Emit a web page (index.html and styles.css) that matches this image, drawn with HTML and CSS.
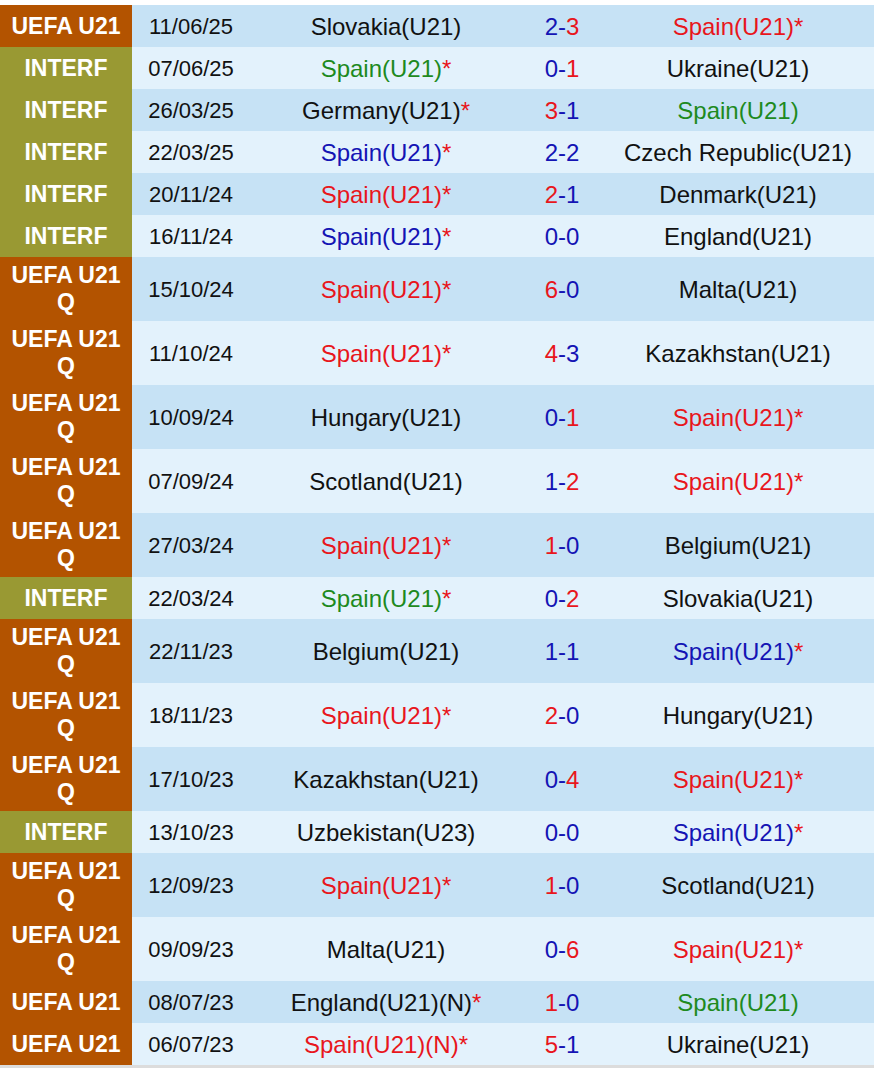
FILE: index.html
```html
<!DOCTYPE html>
<html>
<head>
<meta charset="utf-8">
<link rel="stylesheet" href="styles.css">
</head>
<body>
<table class="results">
<tbody>
<tr class="one dark"><td class="comp euro">UEFA U21</td><td class="date">11/06/25</td><td class="team">Slovakia(U21)</td><td class="score"><span class="b">2</span><span class="b">-</span><span class="r">3</span></td><td class="team r">Spain(U21)<span class="star">*</span></td></tr>
<tr class="one light"><td class="comp fr">INTERF</td><td class="date">07/06/25</td><td class="team g">Spain(U21)<span class="star">*</span></td><td class="score"><span class="b">0</span><span class="b">-</span><span class="r">1</span></td><td class="team">Ukraine(U21)</td></tr>
<tr class="one dark"><td class="comp fr">INTERF</td><td class="date">26/03/25</td><td class="team">Germany(U21)<span class="star">*</span></td><td class="score"><span class="r">3</span><span class="b">-</span><span class="b">1</span></td><td class="team g">Spain(U21)</td></tr>
<tr class="one light"><td class="comp fr">INTERF</td><td class="date">22/03/25</td><td class="team b">Spain(U21)<span class="star">*</span></td><td class="score"><span class="b">2-2</span></td><td class="team">Czech Republic(U21)</td></tr>
<tr class="one dark"><td class="comp fr">INTERF</td><td class="date">20/11/24</td><td class="team r">Spain(U21)<span class="star">*</span></td><td class="score"><span class="r">2</span><span class="b">-</span><span class="b">1</span></td><td class="team">Denmark(U21)</td></tr>
<tr class="one light"><td class="comp fr">INTERF</td><td class="date">16/11/24</td><td class="team b">Spain(U21)<span class="star">*</span></td><td class="score"><span class="b">0-0</span></td><td class="team">England(U21)</td></tr>
<tr class="two dark"><td class="comp euro">UEFA U21 Q</td><td class="date">15/10/24</td><td class="team r">Spain(U21)<span class="star">*</span></td><td class="score"><span class="r">6</span><span class="b">-</span><span class="b">0</span></td><td class="team">Malta(U21)</td></tr>
<tr class="two light"><td class="comp euro">UEFA U21 Q</td><td class="date">11/10/24</td><td class="team r">Spain(U21)<span class="star">*</span></td><td class="score"><span class="r">4</span><span class="b">-</span><span class="b">3</span></td><td class="team">Kazakhstan(U21)</td></tr>
<tr class="two dark"><td class="comp euro">UEFA U21 Q</td><td class="date">10/09/24</td><td class="team">Hungary(U21)</td><td class="score"><span class="b">0</span><span class="b">-</span><span class="r">1</span></td><td class="team r">Spain(U21)<span class="star">*</span></td></tr>
<tr class="two light"><td class="comp euro">UEFA U21 Q</td><td class="date">07/09/24</td><td class="team">Scotland(U21)</td><td class="score"><span class="b">1</span><span class="b">-</span><span class="r">2</span></td><td class="team r">Spain(U21)<span class="star">*</span></td></tr>
<tr class="two dark"><td class="comp euro">UEFA U21 Q</td><td class="date">27/03/24</td><td class="team r">Spain(U21)<span class="star">*</span></td><td class="score"><span class="r">1</span><span class="b">-</span><span class="b">0</span></td><td class="team">Belgium(U21)</td></tr>
<tr class="one light"><td class="comp fr">INTERF</td><td class="date">22/03/24</td><td class="team g">Spain(U21)<span class="star">*</span></td><td class="score"><span class="b">0</span><span class="b">-</span><span class="r">2</span></td><td class="team">Slovakia(U21)</td></tr>
<tr class="two dark"><td class="comp euro">UEFA U21 Q</td><td class="date">22/11/23</td><td class="team">Belgium(U21)</td><td class="score"><span class="b">1-1</span></td><td class="team b">Spain(U21)<span class="star">*</span></td></tr>
<tr class="two light"><td class="comp euro">UEFA U21 Q</td><td class="date">18/11/23</td><td class="team r">Spain(U21)<span class="star">*</span></td><td class="score"><span class="r">2</span><span class="b">-</span><span class="b">0</span></td><td class="team">Hungary(U21)</td></tr>
<tr class="two dark"><td class="comp euro">UEFA U21 Q</td><td class="date">17/10/23</td><td class="team">Kazakhstan(U21)</td><td class="score"><span class="b">0</span><span class="b">-</span><span class="r">4</span></td><td class="team r">Spain(U21)<span class="star">*</span></td></tr>
<tr class="one light"><td class="comp fr">INTERF</td><td class="date">13/10/23</td><td class="team">Uzbekistan(U23)</td><td class="score"><span class="b">0-0</span></td><td class="team b">Spain(U21)<span class="star">*</span></td></tr>
<tr class="two dark"><td class="comp euro">UEFA U21 Q</td><td class="date">12/09/23</td><td class="team r">Spain(U21)<span class="star">*</span></td><td class="score"><span class="r">1</span><span class="b">-</span><span class="b">0</span></td><td class="team">Scotland(U21)</td></tr>
<tr class="two light"><td class="comp euro">UEFA U21 Q</td><td class="date">09/09/23</td><td class="team">Malta(U21)</td><td class="score"><span class="b">0</span><span class="b">-</span><span class="r">6</span></td><td class="team r">Spain(U21)<span class="star">*</span></td></tr>
<tr class="one dark"><td class="comp euro">UEFA U21</td><td class="date">08/07/23</td><td class="team">England(U21)(N)<span class="star">*</span></td><td class="score"><span class="r">1</span><span class="b">-</span><span class="b">0</span></td><td class="team g">Spain(U21)</td></tr>
<tr class="one light"><td class="comp euro">UEFA U21</td><td class="date">06/07/23</td><td class="team r">Spain(U21)(N)<span class="star">*</span></td><td class="score"><span class="r">5</span><span class="b">-</span><span class="b">1</span></td><td class="team">Ukraine(U21)</td></tr>
</tbody>
</table>
</body>
</html>
```
FILE: styles.css
```css
html, body {
  margin: 0;
  padding: 0;
  background: #ffffff;
}
body {
  padding-top: 5px;
  font-family: "Liberation Sans", Arial, sans-serif;
}
.results {
  width: 874px;
  border-collapse: collapse;
  border-spacing: 0;
  table-layout: fixed;
  border-bottom: 3px solid #dcdcdc;
}
.results td {
  padding: 0;
  text-align: center;
  vertical-align: middle;
  font-size: 24px;
  line-height: 27px;
  color: #111111;
  white-space: nowrap;
}
.results .one td { height: 42px; }
.results .two td { height: 64px; }
.dark { background: #c6e2f5; }
.light { background: #e3f2fc; }
.results td.comp {
  width: 116px;
  padding: 0 8px;
  color: #ffffff;
  font-weight: bold;
  font-size: 23px;
  white-space: normal;
}
.results td.euro { background: #b35300; }
.results td.fr { background: #999933; }
.results td.date { width: 118px; font-size: 22px; }
.results td.team:nth-child(3) { width: 272px; }
.results td.score { width: 80px; }
.results .b { color: #1414b4; }
.results .r { color: #e8161c; }
.results .g { color: #1e8a1e; }
.results .star { color: #e8161c; }
```
